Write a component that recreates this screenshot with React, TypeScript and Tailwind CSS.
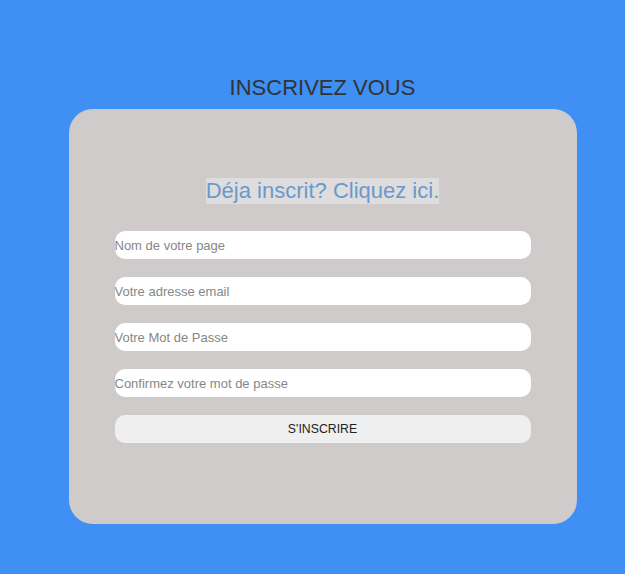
export default function App() {
  const fields = [
    { type: "text", placeholder: "Nom de votre page" },
    { type: "email", placeholder: "Votre adresse email" },
    { type: "password", placeholder: "Votre Mot de Passe" },
    { type: "password", placeholder: "Confirmez votre mot de passe" },
  ];

  return (
    <div className="min-h-[574px] w-full bg-[#3f8ff4] pl-[20px] pt-[75px] font-['Liberation_Sans',Arial,sans-serif]">
      <h1 className="text-center text-[22px] leading-[26px] text-[#333333]">INSCRIVEZ VOUS</h1>

      {/* Card */}
      <div className="mx-auto mt-[8px] flex h-[415px] w-[508px] flex-col items-center rounded-[24px] bg-[#cecbca] pt-[69px]">
        <a href="#" className="bg-[#dedcdc] text-[22px] leading-[26px] text-[#6a9acb]">
          Déja inscrit? Cliquez ici.
        </a>

        <form className="mt-[27px] flex w-[416px] flex-col gap-[18px]" onSubmit={(e) => e.preventDefault()}>
          {fields.map((f) => (
            <input
              key={f.placeholder}
              type={f.type}
              placeholder={f.placeholder}
              className="h-[28px] w-full rounded-[10px] bg-white text-[13px] text-[#333] outline-none placeholder:text-[#878787]"
            />
          ))}
          <button type="submit" className="h-[28px] w-full rounded-[10px] bg-[#efefef] text-[12.3px] text-[#222]">
            S'INSCRIRE
          </button>
        </form>
      </div>
    </div>
  );
}
